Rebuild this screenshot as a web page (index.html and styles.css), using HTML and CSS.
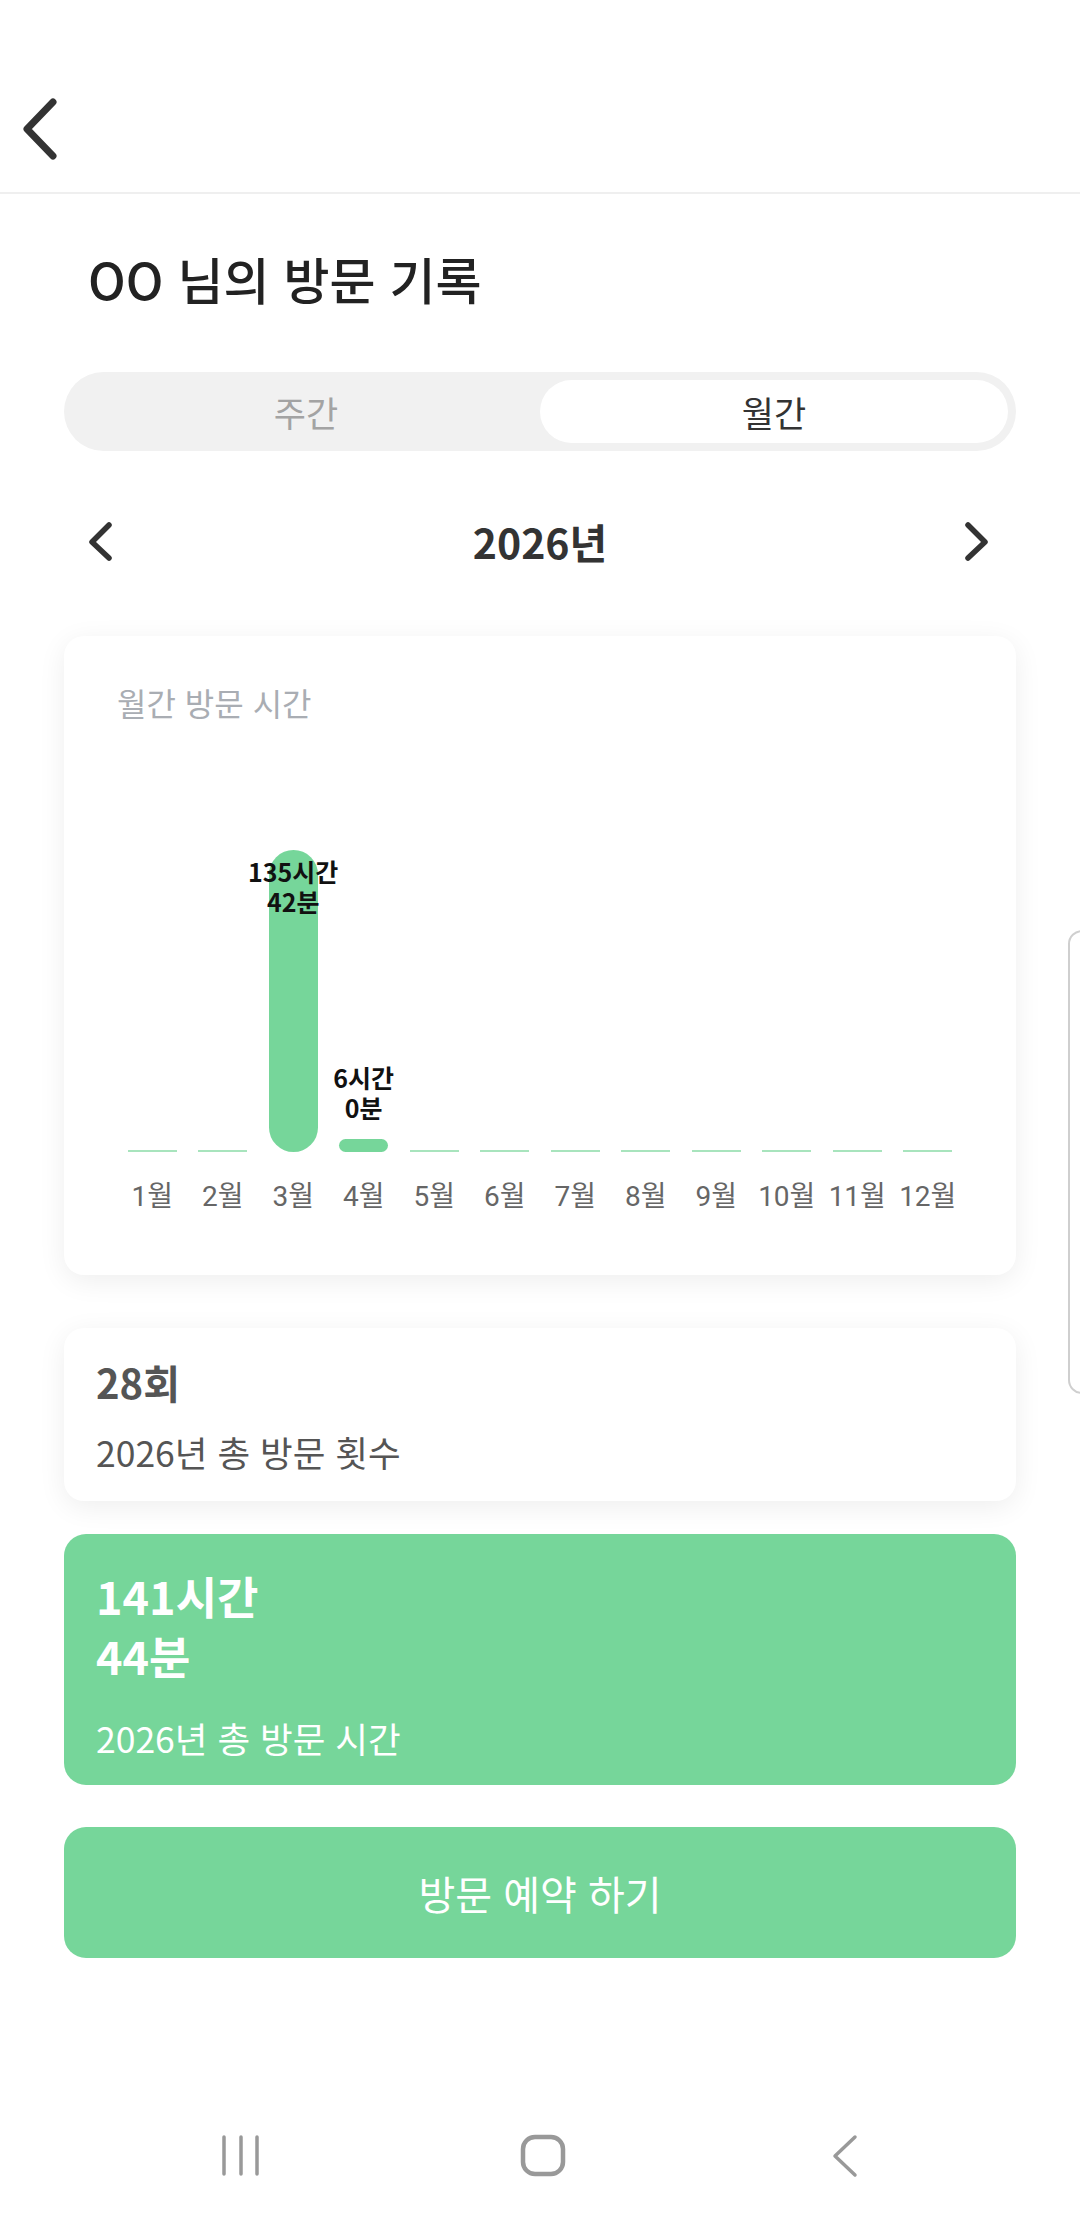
FILE: index.html
```html
<!DOCTYPE html>
<html lang="ko">
<head>
  <meta charset="UTF-8">
  <title>방문 기록</title>
  <link rel="stylesheet" href="styles.css">
</head>
<body>
<div class="screen">

  <!-- 상단 바 -->
  <div class="statusbar"></div>
  <div class="appbar">
    <svg class="back" width="80" height="126" viewBox="0 0 80 126">
      <path d="M53 36 L27 63 L53 90" fill="none" stroke="#333" stroke-width="7" stroke-linecap="round" stroke-linejoin="round"/>
    </svg>
  </div>

  <h1 class="title">OO 님의 방문 기록</h1>

  <!-- 주간 / 월간 -->
  <div class="tabs">
    <div class="tab">주간</div>
    <div class="tab on">월간</div>
  </div>

  <div class="year-row">
    <svg width="40" height="60" viewBox="0 0 40 60">
      <path d="M29 14 L12 31 L29 47" fill="none" stroke="#333" stroke-width="5.5" stroke-linecap="round" stroke-linejoin="round"/>
    </svg>
    <div class="year">2026년</div>
    <svg width="40" height="60" viewBox="0 0 40 60">
      <path d="M8 14 L25 31 L8 47" fill="none" stroke="#333" stroke-width="5.5" stroke-linecap="round" stroke-linejoin="round"/>
    </svg>
  </div>

  <!-- 차트 카드 -->
  <div class="card chart-card">
    <div class="card-title">월간 방문 시간</div>
    <div class="chart">
      <div class="col"><div class="bar empty"></div></div>
      <div class="col"><div class="bar empty"></div></div>
      <div class="col">
        <div class="val" style="bottom: 236px">135시간<br>42분</div>
        <div class="bar" style="height: 302px"></div>
      </div>
      <div class="col">
        <div class="val" style="bottom: 30px">6시간<br>0분</div>
        <div class="bar" style="height: 13px"></div>
      </div>
      <div class="col"><div class="bar empty"></div></div>
      <div class="col"><div class="bar empty"></div></div>
      <div class="col"><div class="bar empty"></div></div>
      <div class="col"><div class="bar empty"></div></div>
      <div class="col"><div class="bar empty"></div></div>
      <div class="col"><div class="bar empty"></div></div>
      <div class="col"><div class="bar empty"></div></div>
      <div class="col"><div class="bar empty"></div></div>
    </div>
    <div class="months">
      <span>1월</span><span>2월</span><span>3월</span><span>4월</span>
      <span>5월</span><span>6월</span><span>7월</span><span>8월</span>
      <span>9월</span><span>10월</span><span>11월</span><span>12월</span>
    </div>
  </div>

  <!-- 요약 -->
  <div class="card stat">
    <div class="stat-big">28회</div>
    <div class="stat-sub">2026년 총 방문 횟수</div>
  </div>

  <div class="card stat green">
    <div class="stat-big">141시간<br>44분</div>
    <div class="stat-sub">2026년 총 방문 시간</div>
  </div>

  <button class="reserve">방문 예약 하기</button>

  <!-- 하단 내비 -->
  <div class="navbar">
    <svg width="100" height="60" viewBox="0 0 100 60">
      <path d="M33 11 V48 M50 11 V48 M66 11 V48" stroke="#999" stroke-width="3.5" stroke-linecap="round"/>
    </svg>
    <svg width="100" height="60" viewBox="0 0 100 60">
      <rect x="30" y="11" width="40" height="37" rx="12" fill="none" stroke="#999" stroke-width="4.5"/>
    </svg>
    <svg width="100" height="60" viewBox="0 0 100 60">
      <path d="M60 11 L40 30 L60 49" fill="none" stroke="#999" stroke-width="3.5" stroke-linecap="round" stroke-linejoin="round"/>
    </svg>
  </div>

  <div class="edge-handle"></div>
</div>
</body>
</html>
```

FILE: styles.css
```css
body {
  margin: 0;
  background: #fff;
  font-family: "Noto Sans CJK KR", "Noto Sans", sans-serif;
  color: #222;
}
.screen {
  position: relative;
  width: 1080px;
  height: 2220px;
  display: flex;
  flex-direction: column;
  overflow: hidden;
}
.statusbar { height: 66px; }
.appbar {
  height: 126px;
  border-bottom: 2px solid #efefef;
  display: flex;
  align-items: center;
}
.title {
  margin: 57px 0 0 88px;
  font-size: 50px;
  font-weight: 500;
  line-height: 55px;
  color: #222;
}

.tabs {
  margin: 66px 64px 0;
  height: 79px;
  box-sizing: border-box;
  padding: 8px;
  background: #f1f1f1;
  border-radius: 40px;
  display: grid;
  grid-template-columns: 1fr 1fr;
}
.tab {
  display: flex;
  align-items: center;
  justify-content: center;
  font-size: 35px;
  color: #a3a3a3;
  border-radius: 32px;
}
.tab.on {
  background: #fff;
  color: #333;
}

.year-row {
  margin-top: 60px;
  height: 60px;
  padding: 0 80px;
  display: flex;
  justify-content: space-between;
  align-items: center;
}
.year {
  font-size: 41px;
  font-weight: 700;
  color: #333;
}

.card {
  margin: 0 64px;
  border-radius: 20px;
  background: #fff;
  box-shadow: 0 6px 28px rgba(0, 0, 0, 0.07);
}
.chart-card {
  margin-top: 65px;
  padding: 47px 53px 61px;
}
.card-title {
  font-size: 32px;
  line-height: 39px;
  color: #a9adb3;
}
.chart {
  margin-top: 30px;
  height: 400px;
  display: grid;
  grid-template-columns: repeat(12, 1fr);
}
.col {
  position: relative;
  display: flex;
  flex-direction: column;
  justify-content: flex-end;
  align-items: center;
}
.bar {
  width: 49px;
  background: #76d69a;
  border-radius: 25px;
}
.bar.empty {
  height: 2px;
  border-radius: 0;
  background: #a8e4bd;
}
.val {
  position: absolute;
  left: -20px;
  right: -20px;
  text-align: center;
  font-size: 25px;
  font-weight: 700;
  line-height: 30px;
  color: #111;
}
.months {
  margin-top: 28px;
  display: grid;
  grid-template-columns: repeat(12, 1fr);
  font-family: Roboto, "Noto Sans CJK KR", sans-serif;
  font-size: 28px;
  line-height: 34px;
  color: #666;
  text-align: center;
  white-space: nowrap;
}

.stat {
  padding: 32px 32px 29px;
}
.card.stat:not(.green) { margin-top: 53px; }
.stat-big {
  font-size: 40px;
  font-weight: 700;
  line-height: 44px;
  color: #555;
}
.stat-sub {
  margin-top: 28px;
  font-size: 35.5px;
  line-height: 40px;
  color: #555;
}
.green {
  margin-top: 33px;
  padding: 32px 32px 27px;
  background: #76d69a;
  box-shadow: none;
  border-radius: 22px;
}
.green .stat-big {
  font-size: 45px;
  line-height: 60px;
  color: #fff;
}
.green .stat-sub {
  margin-top: 32px;
  font-size: 35.5px;
  color: #fff;
}

.reserve {
  margin: 42px 64px 0;
  height: 131px;
  border: none;
  border-radius: 22px;
  background: #76d69a;
  color: #fff;
  font-family: inherit;
  font-size: 40px;
}

.navbar {
  margin-top: auto;
  height: 128px;
  padding-left: 6px;
  display: flex;
  justify-content: center;
  align-items: center;
  gap: 202px;
}

.edge-handle {
  position: absolute;
  left: 1068px;
  top: 930px;
  width: 40px;
  height: 460px;
  border: 2px solid #cfcfcf;
  border-radius: 14px;
  background: #fff;
}
```
